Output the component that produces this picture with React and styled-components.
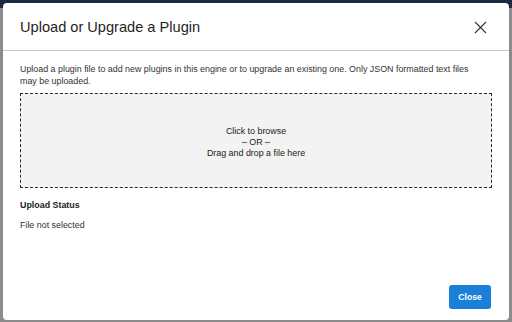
import React from "react";
import styled, { createGlobalStyle } from "styled-components";

const Global = createGlobalStyle`
  html, body { margin: 0; padding: 0; }
  body {
    width: 512px;
    height: 322px;
    overflow: hidden;
    font-family: "Liberation Sans", Arial, Helvetica, sans-serif;
    background: linear-gradient(to bottom, #1c2a45 0, #1c2a45 8px, #8c8c8c 8px, #8c8c8c 100%);
  }
`;

const Backdrop = styled.div`
  width: 512px;
  height: 322px;
  box-sizing: border-box;
  padding: 3px 3px 2px 3px;
  display: flex;
`;

const Dialog = styled.div`
  flex: 1;
  background: #fff;
  border-radius: 4px;
  display: flex;
  flex-direction: column;
  overflow: hidden;
`;

const Header = styled.div`
  height: 48px;
  box-sizing: border-box;
  border-bottom: 1px solid #c8c8c8;
  display: flex;
  align-items: center;
  justify-content: space-between;
  padding: 1px 22px 0 17px;
`;

const Title = styled.h1`
  margin: 0;
  font-size: 14.6px;
  font-weight: 400;
  color: #1e1e1e;
`;

const CloseX = styled.button`
  border: 0;
  background: none;
  padding: 0;
  width: 13px;
  height: 13px;
  display: flex;
  cursor: pointer;
`;

const Body = styled.div`
  flex: 1;
  padding: 12px 17px 0 17px;
  display: flex;
  flex-direction: column;
`;

const Intro = styled.p`
  margin: 0;
  padding-right: 18px;
  font-size: 8.9px;
  line-height: 12px;
  color: #333;
`;

const DropZone = styled.div`
  margin-top: 6px;
  height: 95px;
  box-sizing: border-box;
  border: 1.6px dashed #2a2a2a;
  background: #f3f3f3;
  display: flex;
  flex-direction: column;
  align-items: center;
  justify-content: center;
  padding-top: 4px;
`;

const DropLine = styled.div`
  font-size: 8.9px;
  line-height: 11px;
  color: #222;
`;

const StatusTitle = styled.div`
  margin-top: 12px;
  font-size: 8.9px;
  font-weight: 700;
  color: #222;
`;

const StatusText = styled.div`
  margin-top: 10px;
  font-size: 8.9px;
  color: #333;
`;

const Footer = styled.div`
  display: flex;
  justify-content: flex-end;
  padding: 0 18px 11px 0;
`;

const Button = styled.button`
  width: 42px;
  height: 24px;
  border: 0;
  border-radius: 3px;
  background: #1a7fd8;
  color: #fff;
  font-family: "Liberation Sans", Arial, sans-serif;
  font-weight: 700;
  font-size: 8.6px;
  padding: 0;
  cursor: pointer;
`;

export default function App() {
  return (
    <>
      <Global />
      <Backdrop>
        <Dialog>
          <Header>
            <Title>Upload or Upgrade a Plugin</Title>
            <CloseX aria-label="Close">
              <svg width="13" height="13" viewBox="0 0 13 13">
                <path d="M1 1 L12 12 M12 1 L1 12" stroke="#333" strokeWidth="1.1" fill="none" />
              </svg>
            </CloseX>
          </Header>
          <Body>
            <Intro>
              Upload a plugin file to add new plugins in this engine or to upgrade an existing one. Only JSON formatted text files may be uploaded.
            </Intro>
            <DropZone>
              <DropLine>Click to browse</DropLine>
              <DropLine>– OR –</DropLine>
              <DropLine>Drag and drop a file here</DropLine>
            </DropZone>
            <StatusTitle>Upload Status</StatusTitle>
            <StatusText>File not selected</StatusText>
          </Body>
          <Footer>
            <Button>Close</Button>
          </Footer>
        </Dialog>
      </Backdrop>
    </>
  );
}
